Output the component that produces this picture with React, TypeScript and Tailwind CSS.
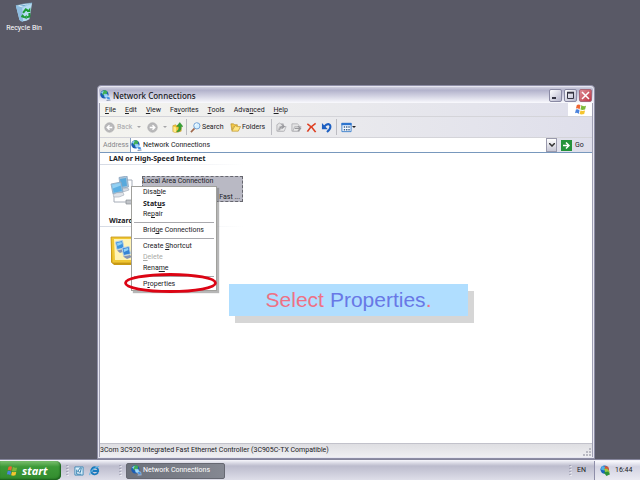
import type { ReactNode } from "react";

type MenuEntry = { label: string; hotkey: number; bold?: boolean; disabled?: boolean } | null;

// null stands for a separator line
const CONTEXT_MENU: MenuEntry[] = [
  { label: "Disable", hotkey: 4 },
  { label: "Status", hotkey: 4, bold: true },
  { label: "Repair", hotkey: 2 },
  null,
  { label: "Bridge Connections", hotkey: 4 },
  null,
  { label: "Create Shortcut", hotkey: 7 },
  { label: "Delete", hotkey: 0, disabled: true },
  { label: "Rename", hotkey: 4 },
  null,
  { label: "Properties", hotkey: 1 },
];

const MENU_BAR = [
  { label: "File", hotkey: 0 },
  { label: "Edit", hotkey: 0 },
  { label: "View", hotkey: 0 },
  { label: "Favorites", hotkey: 2 },
  { label: "Tools", hotkey: 0 },
  { label: "Advanced", hotkey: 4 },
  { label: "Help", hotkey: 0 },
];

function Hotkey({ label, at }: { label: string; at: number }) {
  return (
    <>
      {label.slice(0, at)}
      <span className="underline">{label[at]}</span>
      {label.slice(at + 1)}
    </>
  );
}

function GlobeIcon() {
  return (
    <svg viewBox="0 0 12 12" className="size-[11px] shrink-0" aria-hidden="true">
      <circle cx="4.8" cy="4.8" r="4.500" fill="#1a5db4" />
      <path d="M3 .8Q6-.4 8 2L7 5 5 4 4 6 2 4Z" fill="#3fae55" />
      <path d="M1 3Q2 1 4 1L3 4Z" fill="#8ccdf2" />
      <path d="M4.500 4.500l3.500.5.8 3.200-3.500-.3Z" fill="#8fdcff" stroke="#e8f4ff" strokeWidth=".4" />
      <path d="M7 7l3.500.5.8 3-3.500-.3Z" fill="#3f8fe0" stroke="#dfeeff" strokeWidth=".4" />
      <path d="M6.500 10.800l4.500-.3.800 1-4 .5Z" fill="#8e9ab5" />
    </svg>
  );
}

function WindowsFlag({ className }: { className: string }) {
  return (
    <svg viewBox="0 0 14 12" className={className} aria-hidden="true">
      <path d="M3 1Q5 0 7 1L6 6Q4 4 2 5Z" fill="#ee6633" />
      <path d="M8 1Q10 3 13 2L12 6Q9 7 7 6Z" fill="#7db93a" />
      <path d="M2 6Q4 5 6 7L5 11Q3 9 1 10Z" fill="#4b83dd" />
      <path d="M7 7Q9 8 12 7L11 11Q8 12 6 11Z" fill="#f5c52f" />
    </svg>
  );
}

function RecycleBinIcon() {
  return (
    <svg viewBox="0 0 20 22" className="h-[20px] w-[18px]" aria-hidden="true">
      <path d="M1 4L8 5 19 1 16 19Q10 23 5 20Z" fill="#b5dcf3" />
      <path d="M1 4L8 5 9 22Q6 22 5 20Z" fill="#8dbce0" />
      <path d="M1 4L10 2 19 1 8 6Z" fill="#eaf8ff" stroke="#7ab4d8" strokeWidth=".6" />
      <path d="M5 4l6-1 4-.5-6 2.500Z" fill="#6aa5cf" />
      <path d="M9 12l3-4 3 2M16 12l0 4-3 1M11 17l-3-1 1-2" fill="none" stroke="#1c9a36" strokeWidth="2.200" />
      <path d="M13 11h4V6ZM13 14v5l-3-2Z" fill="#1c9a36" />
    </svg>
  );
}

function RoundArrow({ flip }: { flip?: boolean }) {
  return (
    <svg viewBox="0 0 12 12" className="size-[11px] shrink-0" aria-hidden="true">
      <circle cx="6" cy="6" r="5.2" fill="#b9b9ba" stroke="#a2a2a5" strokeWidth=".6" />
      <path
        d={flip ? "M3 6h5M6 3.5L8.5 6 6 8.5" : "M9 6H4M6 3.5L3.5 6 6 8.5"}
        fill="none"
        stroke="#fff"
        strokeWidth="1.5"
      />
    </svg>
  );
}

function SmallCaret({ className }: { className: string }) {
  return (
    <svg viewBox="0 0 4 2" className={className} aria-hidden="true">
      <path d="M0 0h4L2 2Z" fill="currentColor" />
    </svg>
  );
}

function FolderUpIcon() {
  return (
    <svg viewBox="0 0 12 12" className="size-[11px]" aria-hidden="true">
      <path d="M1 4l3-1 1 1h5v6l-6 1.500-3-1Z" fill="#f3c63c" stroke="#b98e1c" strokeWidth=".6" />
      <path d="M1.500 10.500V5l3 1v5.500Z" fill="#ffe98c" />
      <path d="M5 10Q8 9 7.500 5H5l3.500-4.500L12 5h-2q.5 5-4 6Z" fill="#36a233" stroke="#217a21" strokeWidth=".4" />
    </svg>
  );
}

function SearchIcon() {
  return (
    <svg viewBox="0 0 12 12" className="size-[11px] shrink-0" aria-hidden="true">
      <path d="M1 11l4-4" stroke="#a0674b" strokeWidth="1.8" />
      <circle cx="7.5" cy="4.2" r="3.4" fill="#d6f0ff" stroke="#6b9bd2" />
      <path d="M5.5 4q0-2 2-2" fill="none" stroke="#fff" />
    </svg>
  );
}

function FoldersIcon() {
  return (
    <svg viewBox="0 0 12 12" className="size-[11px] shrink-0" aria-hidden="true">
      <path d="M1 2h3l1 1h3v2H4L2 9Z" fill="#f2c84a" stroke="#b78d20" strokeWidth=".7" />
      <path d="M2 10l3-5 1-1 2 1h3.5L9 10Z" fill="#ffe682" stroke="#b78d20" strokeWidth=".7" />
    </svg>
  );
}

function TransferIcon({ to }: { to: "up" | "right" }) {
  return (
    <svg viewBox="0 0 12 12" className="size-[11px]" aria-hidden="true">
      <path d={to === "up" ? "M1 3l3-2 1 1h3v8H1Z" : "M1 2h6l2 2v6H1Z"} fill="#e4e4e5" stroke="#a6a6aa" strokeWidth=".8" />
      <path d="M2 10l2-5h7l-2 5Z" fill="#e9e9ea" stroke="#a6a6aa" strokeWidth=".7" />
      <path
        d={to === "up" ? "M4 9q0-4 4-4M6 2.500l3 2.500-3 2.500" : "M4 7h6M7.500 4.500l3 2.500-3 2.500"}
        fill="none"
        stroke="#98989c"
        strokeWidth="1.200"
      />
    </svg>
  );
}

function DeleteIcon() {
  return (
    <svg viewBox="0 0 12 12" className="size-[11px]" aria-hidden="true">
      <path d="M1.500 2q5 3 9 9M10.500 1.500Q5 5 1.500 10.500" fill="none" stroke="#de3e20" strokeWidth="1.8" />
    </svg>
  );
}

function UndoIcon() {
  return (
    <svg viewBox="0 0 12 12" className="size-[11px]" aria-hidden="true">
      <path d="M3.500 5Q7 1 9.500 3 12 6 6.500 11" fill="none" stroke="#1c5fc2" strokeWidth="2.200" />
      <path d="M1 1v7h6.500Z" fill="#1c5fc2" />
    </svg>
  );
}

function ViewsIcon() {
  return (
    <svg viewBox="0 0 12 12" className="size-[11px]" aria-hidden="true">
      <path d="M1 1.500h10v9H1Z" fill="#f4f9ff" stroke="#3a7ecb" />
      <path d="M.5 1h11v2.500H.5Z" fill="#2d74ce" />
      <path d="M3 5.500h1.500M5.500 5.500h1.500M8 5.500h1.500M3 8.500h1.500M5.500 8.500h1.500M8 8.500h1.500" stroke="#3c608c" strokeWidth="1.500" />
    </svg>
  );
}

function ComputersIcon() {
  return (
    <svg viewBox="0 0 26 30" className="h-[30px] w-[26px]" aria-hidden="true">
      <path d="M17 4h5v20M4 20v6h14" fill="none" stroke="#a6adb8" />
      <path d="M9 1.500l8-1.500 1.500 11-8 1.500Z" fill="#a9c3d8" stroke="#8aa5bf" strokeWidth=".8" />
      <path d="M10 3l6-1 1 8-6 1Z" fill="#58a9dc" />
      <path d="M11 13l7-1 1 2-6 2Z" fill="#d5dae2" stroke="#a1aab6" strokeWidth=".6" />
      <path d="M1 8l10-2 2 10-10 2Z" fill="#9fc3dd" stroke="#86a5c0" strokeWidth=".8" />
      <path d="M2 8.800l8.300-1.700 1.600 8-8.200 1.700Z" fill="#5cb0e4" />
      <path d="M2 8.800l8.300-1.700.5 2.500-8 3Z" fill="#93d0f2" />
      <path d="M3 18.500Q6 16 13 16.500l1 2.500Q9 22 4 21Z" fill="#dfe3e9" stroke="#a1aab6" strokeWidth=".6" />
      <path d="M16 24h9v4h-9Z" fill="#c0c3c8" stroke="#888c93" strokeWidth=".7" />
    </svg>
  );
}

function WizardIcon() {
  return (
    <svg viewBox="0 0 30 30" className="size-[30px]" aria-hidden="true">
      <path d="M1 1h28v28H4L1 26Z" fill="#c99b15" />
      <path d="M1 1h27v26H2Z" fill="#f0c733" stroke="#c49516" strokeWidth=".8" />
      <path d="M4 3h23v21H5Z" fill="#fff3b5" />
      <path d="M5.500 6l7-1.500 1.500 7.500-7 1.500Z" fill="#3d93dc" stroke="#b5cfe8" />
      <path d="M7 7l4.500-1 .5 2-4.500 2Z" fill="#8fd0f8" />
      <path d="M7 14.500l6-1.500 2 2-5 2Z" fill="#8593b5" />
      <path d="M12 12l7-1.500 1.500 7.500-7 1.500Z" fill="#3683d4" stroke="#b5cfe8" />
      <path d="M13.500 13l4.500-1 .5 2-4.500 2Z" fill="#8fd0f8" />
      <path d="M13 20.500l7-1.500 2 2-5 2Z" fill="#8593b5" />
    </svg>
  );
}

function ToolSeparator() {
  return <span className="h-4 w-px shrink-0 bg-[#bcbcc2]" />;
}

function Grip() {
  return (
    <svg viewBox="0 0 3 12" className="h-3 w-[3px] shrink-0" aria-hidden="true">
      <path d="M1 0v12" stroke="#85859a" strokeWidth="1" strokeDasharray="1 2" />
      <path d="M2 1v11" stroke="#fff" strokeWidth="1" strokeDasharray="1 2" />
    </svg>
  );
}

function CaptionButton({ label, close, children }: { label: string; close?: boolean; children: ReactNode }) {
  return (
    <button
      type="button"
      aria-label={label}
      className={
        close
          ? "flex size-[13px] items-center justify-center rounded-[2px] border border-[#a76878] bg-linear-to-br from-[#dd8a94] to-[#bd3346]"
          : "flex size-[13px] items-center justify-center rounded-[2px] border border-[#8989a3] bg-linear-to-br from-white to-[#b5b5cb]"
      }
    >
      <svg viewBox="0 0 11 11" className="size-[11px]" aria-hidden="true">
        {children}
      </svg>
    </button>
  );
}

function TitleBar() {
  return (
    <header className="flex h-4 shrink-0 items-center gap-px rounded-t-[3px] bg-linear-to-b from-[#d0d0df] via-[#b2b2cb] via-20% to-[#fafafe] pl-px">
      <GlobeIcon />
      <h1 className="flex-1 pl-px font-['Noto_Sans',sans-serif] text-[8px] font-medium text-[#18181c]">
        Network Connections
      </h1>
      <div className="flex gap-[2px] pr-px">
        <CaptionButton label="Minimize">
          <path d="M2 8h4" stroke="#343442" strokeWidth="2" />
        </CaptionButton>
        <CaptionButton label="Maximize">
          <path d="M2.500 3h6v5.500h-6Z" fill="none" stroke="#343442" />
          <path d="M2 2.500h7" stroke="#343442" strokeWidth="1.500" />
        </CaptionButton>
        <CaptionButton label="Close" close>
          <path d="M2 2l7 7M9 2L2 9" stroke="#fff" strokeWidth="1.500" />
        </CaptionButton>
      </div>
    </header>
  );
}

function MenuBar() {
  return (
    <nav className="flex h-[14px] shrink-0 items-stretch border-b border-[#d4d4d9]">
      <div className="flex flex-1 items-center gap-[9px] pt-px pl-[5px]">
        {MENU_BAR.map((item) => (
          <button key={item.label} type="button">
            <Hotkey label={item.label} at={item.hotkey} />
          </button>
        ))}
      </div>
      <div className="flex w-6 items-center justify-center bg-white">
        <WindowsFlag className="h-[11px] w-[13px]" />
      </div>
    </nav>
  );
}

function Toolbar() {
  return (
    <div className="flex h-[21px] shrink-0 items-center border-b border-[#d4d4d9] pl-1">
      <button type="button" disabled className="flex w-[27px] items-center gap-[2px] text-[#a5a5a8]">
        <RoundArrow />
        Back
      </button>
      <SmallCaret className="ml-[6px] h-[2px] w-1 text-[#a5a5a8]" />
      <button type="button" disabled aria-label="Forward" className="ml-[6px]">
        <RoundArrow flip />
      </button>
      <SmallCaret className="ml-[5px] h-[2px] w-1 text-[#a5a5a8]" />
      <button type="button" aria-label="Up" className="mr-[3px] ml-[5px]">
        <FolderUpIcon />
      </button>
      <ToolSeparator />
      <button type="button" className="ml-[3px] flex w-[40px] items-center gap-px">
        <SearchIcon />
        Search
      </button>
      <button type="button" className="flex w-[41px] items-center gap-px">
        <FoldersIcon />
        Folders
      </button>
      <ToolSeparator />
      <div className="mx-[4px] flex gap-[4px]">
        <button type="button" disabled aria-label="Move to">
          <TransferIcon to="up" />
        </button>
        <button type="button" disabled aria-label="Copy to">
          <TransferIcon to="right" />
        </button>
        <button type="button" aria-label="Delete">
          <DeleteIcon />
        </button>
        <button type="button" aria-label="Undo">
          <UndoIcon />
        </button>
      </div>
      <ToolSeparator />
      <button type="button" aria-label="Views" className="ml-[4px] flex items-center">
        <ViewsIcon />
        <SmallCaret className="h-[2px] w-1" />
      </button>
    </div>
  );
}

function AddressBar() {
  return (
    <div className="flex h-[14px] shrink-0 items-stretch">
      <label htmlFor="address" className="flex w-[30px] items-center pl-[3px] text-[#85858a]">
        Address
      </label>
      <div className="flex flex-1 items-center gap-px border-l border-[#86a0c4] bg-white">
        <GlobeIcon />
        <input id="address" defaultValue="Network Connections" className="min-w-0 flex-1 outline-none" />
        <button
          type="button"
          aria-label="Show addresses"
          className="flex h-full w-[11px] items-center justify-center border border-[#9a9aad] bg-linear-to-b from-white to-[#c7c7d5]"
        >
          <svg viewBox="0 0 6 4" className="h-1 w-[6px]" aria-hidden="true">
            <path d="M0 0l3 3 3-3" fill="none" stroke="#333" strokeWidth="1.500" />
          </svg>
        </button>
      </div>
      <button type="button" className="flex w-[35px] items-center gap-[3px] pl-1">
        <svg viewBox="0 0 11 11" className="size-[11px]" aria-hidden="true">
          <path d="M0 0h11v11H0Z" fill="#24933a" />
          <path d="M2 5.500h6M5 2.500l3 3-3 3" fill="none" stroke="#fff" strokeWidth="1.500" />
        </svg>
        Go
      </button>
    </div>
  );
}

function GroupHeading({ children }: { children: ReactNode }) {
  return (
    <>
      <h2 className="pl-[9px] font-['Noto_Sans',sans-serif] font-bold">{children}</h2>
      <div className="mt-px h-px w-[144px] bg-linear-to-r from-[#d5dae4] to-white" />
    </>
  );
}

function ContextMenu() {
  return (
    <div
      role="menu"
      className="absolute top-[186px] left-[131px] w-[86px] border border-[#a0a09c] bg-white shadow-[2px_2px_1px_#77777788]"
    >
      {CONTEXT_MENU.map((entry, i) =>
        entry === null ? (
          <div key={i} role="separator" className="mx-[2px] my-[2px] h-px bg-[#aaaaae]" />
        ) : (
          <button
            key={entry.label}
            type="button"
            role="menuitem"
            disabled={entry.disabled}
            className={`flex h-[11px] w-full items-center pl-[11px] whitespace-pre ${
              entry.disabled ? "text-[#aaaaa6]" : ""
            } ${entry.bold ? "font-['Noto_Sans',sans-serif] font-bold" : ""}`}
          >
            <span>
              <Hotkey label={entry.label} at={entry.hotkey} />
            </span>
          </button>
        ),
      )}
      <svg
        viewBox="0 0 93 20"
        className="pointer-events-none absolute -bottom-[3px] -left-[8px] h-5 w-[93px]"
        aria-hidden="true"
      >
        <ellipse cx="46.500" cy="10" rx="45" ry="8.500" fill="none" stroke="#dc0414" strokeWidth="2.800" />
      </svg>
    </div>
  );
}

function NetworkWindow() {
  return (
    <section className="absolute top-[85px] right-[45px] bottom-[21px] left-[97px] flex flex-col rounded-t-[4px] border border-[#8d8da5] bg-[#e6e6f0] p-px">
      <TitleBar />
      <div className="flex flex-1 flex-col border-x border-[#a0a0b4] bg-linear-to-r from-[#f4f4ef] to-[#dfdfeb]">
        <MenuBar />
        <Toolbar />
        <AddressBar />
        <main className="flex-1 border-t border-[#7898bd] bg-white pt-px">
          <GroupHeading>LAN or High-Speed Internet</GroupHeading>
          <div className="mt-[11px] flex h-10 items-start gap-[6px] pl-[10px]">
            <ComputersIcon />
            <div className="flex h-[26px] w-[101px] flex-col justify-between border border-dashed border-[#66666e] bg-[#b9b9c4] leading-[8px]">
              <span>Local Area Connection</span>
              <span className="self-end pr-[2px]">Fast ...</span>
            </div>
          </div>
          <GroupHeading>Wizard</GroupHeading>
          <div className="mt-[9px] pl-[10px]">
            <WizardIcon />
          </div>
        </main>
        <footer className="flex h-[14px] shrink-0 items-center justify-between border-t border-[#c2c2cb] bg-linear-to-b from-[#dedee2] to-[#efeff2]">
          <span>3Com 3C920 Integrated Fast Ethernet Controller (3C905C-TX Compatible)</span>
          <svg viewBox="0 0 9 9" className="size-[9px] self-end" aria-hidden="true">
            <path d="M7 0v2M7 3v2M4 3v2M7 6v2M4 6v2M1 6v2" stroke="#b9b9c2" strokeWidth="2" />
          </svg>
        </footer>
      </div>
    </section>
  );
}

function Taskbar() {
  return (
    <footer className="absolute inset-x-0 bottom-0 flex h-[21px] items-center border-t border-[#85859c] bg-linear-to-b from-[#f7f7fc] via-[#bcbccd] via-30% to-[#dedee9] pt-px">
      <button
        type="button"
        className="flex h-full w-[61px] items-center gap-1 rounded-r-[5px] bg-linear-to-b from-[#7bc06f] via-[#3d9a38] via-30% to-[#328b2e] pl-[6px] font-['Noto_Sans',sans-serif] text-[11px] font-bold text-white italic shadow-[inset_-1px_-1px_2px_#195d1b]"
      >
        <WindowsFlag className="h-3 w-3" />
        start
      </button>
      <div className="flex w-[65px] items-center pl-[5px]">
        <Grip />
        <button type="button" aria-label="Show desktop" className="ml-[5px]">
          <svg viewBox="0 0 11 11" className="size-[10px]" aria-hidden="true">
            <path d="M1 1h9v9H1Z" fill="#d9effb" stroke="#3c86b5" />
            <path d="M7 2L4 6l3 1 1-5ZM3 4v5h5" fill="#f5fbff" stroke="#2474a7" />
          </svg>
        </button>
        <button type="button" aria-label="Internet Explorer" className="ml-[5px]">
          <svg viewBox="0 0 12 12" className="size-[11px]" aria-hidden="true">
            <path d="M10 8Q8 11 5 10 2 9 2.500 5.500 4 2 7 2.500 10 3 10 6.500H4" fill="none" stroke="#1b7bbd" strokeWidth="2" />
            <path d="M1 11Q0 8 6 4 10 1 11 2" fill="none" stroke="#5eb4e6" strokeWidth="1.200" />
          </svg>
        </button>
        <span className="ml-auto pr-1">
          <Grip />
        </span>
      </div>
      <button
        type="button"
        className="flex h-4 w-[99px] items-center gap-px rounded-[2px] border border-[#666872] bg-linear-to-r from-[#6d717b] to-[#858892] pl-1 text-white"
      >
        <GlobeIcon />
        Network Connections
      </button>
      <div className="ml-auto flex items-center gap-[5px] pr-[8px]">
        <Grip />
        EN
      </div>
      <div className="flex h-full w-[46px] items-center gap-[4px] border-l border-[#8e8ea9] bg-linear-to-b from-[#fafafe] via-[#d3d3e2] via-30% to-[#eaeaf2] pl-[5px]">
        <svg viewBox="0 0 12 12" className="size-[11px]" aria-hidden="true">
          <circle cx="5" cy="5" r="4.500" fill="#1966bd" />
          <path d="M2 1l4 1-2 4-3-1Z" fill="#4fb0e8" />
          <path d="M5 1l4 1 1 4-4 1Z" fill="#d85532" />
          <path d="M4 4l4 0 3 4-4 2Z" fill="#9bcb45" />
          <path d="M4 8l5-1 2 3-4 2Z" fill="#2b923a" />
        </svg>
        16:44
      </div>
    </footer>
  );
}

export default function App() {
  return (
    <div className="relative h-screen overflow-hidden bg-[#595966] font-[Roboto,'Liberation_Sans',sans-serif] text-[7px] leading-[9px] text-[#202024]">
      <button type="button" className="absolute top-[2px] left-1 flex w-10 flex-col items-center gap-[2px] text-white">
        <RecycleBinIcon />
        Recycle Bin
      </button>
      <NetworkWindow />
      <ContextMenu />
      <Taskbar />
      <p className="absolute top-[284px] left-[229px] flex h-8 w-[239px] items-center justify-center gap-[6px] bg-[#b0deff] font-['Liberation_Sans',sans-serif] text-[21px] leading-6 text-[#ee7185] shadow-[6px_7px_0_#d6d6d6]">
        Select
        <span>
          <span className="text-[#6878e6]">Properties</span>.
        </span>
      </p>
    </div>
  );
}
